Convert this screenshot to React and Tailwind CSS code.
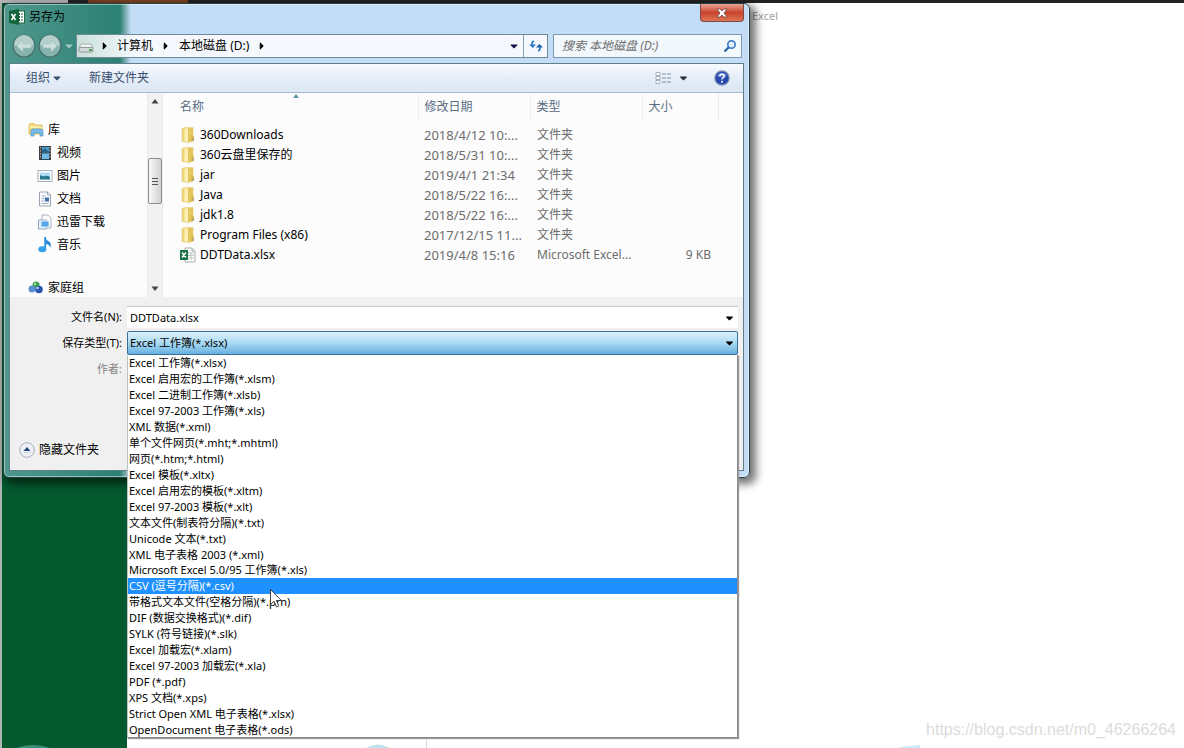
import { FaCaretDown, FaCaretRight } from 'react-icons/fa';

const FILES = [
  { name: '360Downloads', date: '2018/4/12 10:...', type: '文件夹' },
  { name: '360云盘里保存的', date: '2018/5/31 10:...', type: '文件夹' },
  { name: 'jar', date: '2019/4/1 21:34', type: '文件夹' },
  { name: 'Java', date: '2018/5/22 16:...', type: '文件夹' },
  { name: 'jdk1.8', date: '2018/5/22 16:...', type: '文件夹' },
  { name: 'Program Files (x86)', date: '2017/12/15 11...', type: '文件夹' },
  { name: 'DDTData.xlsx', date: '2019/4/8 15:16', type: 'Microsoft Excel...', size: '9 KB' },
];

const FORMATS = [
  'Excel 工作簿(*.xlsx)',
  'Excel 启用宏的工作簿(*.xlsm)',
  'Excel 二进制工作簿(*.xlsb)',
  'Excel 97-2003 工作簿(*.xls)',
  'XML 数据(*.xml)',
  '单个文件网页(*.mht;*.mhtml)',
  '网页(*.htm;*.html)',
  'Excel 模板(*.xltx)',
  'Excel 启用宏的模板(*.xltm)',
  'Excel 97-2003 模板(*.xlt)',
  '文本文件(制表符分隔)(*.txt)',
  'Unicode 文本(*.txt)',
  'XML 电子表格 2003 (*.xml)',
  'Microsoft Excel 5.0/95 工作簿(*.xls)',
  'CSV (逗号分隔)(*.csv)',
  '带格式文本文件(空格分隔)(*.prn)',
  'DIF (数据交换格式)(*.dif)',
  'SYLK (符号链接)(*.slk)',
  'Excel 加载宏(*.xlam)',
  'Excel 97-2003 加载宏(*.xla)',
  'PDF (*.pdf)',
  'XPS 文档(*.xps)',
  'Strict Open XML 电子表格(*.xlsx)',
  'OpenDocument 电子表格(*.ods)',
];

const HIGHLIGHTED = 'CSV (逗号分隔)(*.csv)';

const ExcelAppIcon = () => (
  <svg viewBox="0 0 16 16" className="w-4 h-4 shrink-0">
    <rect x="8" y="2" width="7.5" height="12" fill="#fff" stroke="#1d6b42" />
    <path d="M10.500 4v8M13 4v8" stroke="#1d6b42" strokeDasharray="2 1" />
    <path d="M0 2l10-2v16L0 14z" fill="#14653c" />
    <path d="M2.5 5l4 6M6.5 5l-4 6" stroke="#fff" strokeWidth="1.6" />
  </svg>
);

const SheetIcon = () => (
  <svg viewBox="0 0 16 16" className="w-4 h-4 shrink-0">
    <path d="M5 1h7l3 3v11H5z" fill="#fdfdfd" stroke="#a9b0ac" />
    <path d="M12 1v3h3" fill="#e5e9e7" stroke="#a9b0ac" />
    <path d="M8 6h6M8 8.500h6M8 11h6M11 5v8" stroke="#bccbc2" />
    <rect x="0" y="3" width="8" height="10" fill="#1c7148" />
    <path d="M2 5.500l4 5M6 5.500l-4 5" stroke="#fff" strokeWidth="1.4" />
  </svg>
);

const FolderIcon = () => (
  <svg viewBox="0 0 16 16" className="w-4 h-4 shrink-0">
    <path d="M2 1.500L6 .5h7V14l-5 1.500-6-1z" fill="#f0d676" stroke="#e3cb7a" strokeWidth=".6" />
    <path d="M8 1h5v13l-5 1.500z" fill="#e6c65e" />
    <path d="M4.500 1.500h3.500V15l-3.500-.5z" fill="#fbefb4" />
    <path d="M11 8l3 1v5l-3 .5z" fill="#dcbb52" />
    <path d="M12.800 11v2.500" stroke="#8f9a8c" />
  </svg>
);

const LibraryIcon = () => (
  <svg viewBox="0 0 16 16" className="w-4 h-4 shrink-0">
    <path d="M1 3l1-1.500h4L7 3h7v9H1z" fill="#f6dc7c" stroke="#d9b548" strokeWidth=".8" />
    <path d="M1.500 5h12" stroke="#fdf2bd" strokeWidth="1.500" />
    <path d="M3 14V9q0-2 2-2h7q3 0 3 2v5h-3v-3H6v3z" fill="#78bdea" stroke="#4a93c9" strokeWidth=".7" />
  </svg>
);

const VideoIcon = () => (
  <svg viewBox="0 0 16 16" className="w-4 h-4 shrink-0">
    <rect x="2" y="1" width="12" height="14" fill="#37414c" />
    <rect x="5" y="2" width="7" height="5.500" fill="#4a9ed2" />
    <rect x="5" y="8.500" width="7" height="5.500" fill="#69bde6" />
    <path d="M5 5.500l3-2 4 3v1H5z" fill="#275f86" />
    <path d="M3.500 2v12M13 2v12" stroke="#d7a68a" strokeDasharray="1.500 1.500" />
  </svg>
);

const PictureIcon = () => (
  <svg viewBox="0 0 16 16" className="w-4 h-4 shrink-0">
    <rect x="1" y="2.500" width="14" height="11" fill="#fff" stroke="#a5b0ba" />
    <rect x="3" y="4.500" width="10" height="7" fill="#a9dbf5" />
    <path d="M3 7q3 2 5 1t5 1v2.500H3z" fill="#2b7890" />
  </svg>
);

const DocumentIcon = () => (
  <svg viewBox="0 0 16 16" className="w-4 h-4 shrink-0">
    <path d="M2.500 1h8l3 3v11h-11z" fill="#f9fbfd" stroke="#9aa5b1" />
    <path d="M10.500 1v3h3" fill="#dfe6ee" stroke="#9aa5b1" />
    <path d="M4.500 5h4M4.500 7.500h3M4.500 10h3M4.500 12.500h7" stroke="#9cacbd" />
    <rect x="8" y="6.500" width="4" height="4" fill="#3f6fa5" />
  </svg>
);

const DownloadIcon = () => (
  <svg viewBox="0 0 16 16" className="w-4 h-4 shrink-0">
    <path d="M5 1h6l3 3v10H5z" fill="#fafcfe" stroke="#a8b4c0" />
    <path d="M1.500 6h8v9h-8z" fill="#e8f1fa" stroke="#93a7bc" />
    <rect x="4" y="7" width="8" height="6" rx="1" fill="#56a5e6" stroke="#d9ecfb" />
  </svg>
);

const MusicIcon = () => (
  <svg viewBox="0 0 16 16" className="w-4 h-4 shrink-0">
    <path d="M8 0q1 3 4 4.500t1 6.500q0-4-5-4z" fill="#2a8ddc" />
    <path d="M8.200 0v12" stroke="#2a8ddc" strokeWidth="1.800" />
    <ellipse cx="5.300" cy="12.300" rx="4" ry="3" fill="#35a0ea" />
  </svg>
);

const HomegroupIcon = () => (
  <svg viewBox="0 0 16 16" className="w-4 h-4 shrink-0">
    <circle cx="8" cy="5" r="3.500" fill="#3aa04a" />
    <circle cx="4" cy="9" r="3.500" fill="#5a8fd0" />
    <circle cx="11" cy="9.500" r="3.800" fill="#2c55b0" />
    <circle cx="9.500" cy="8" r="1.300" fill="#b6d3f5" />
    <circle cx="7" cy="4" r="1.200" fill="#a9e0ae" />
  </svg>
);

const LIBRARIES = [
  { label: '视频', Icon: VideoIcon },
  { label: '图片', Icon: PictureIcon },
  { label: '文档', Icon: DocumentIcon },
  { label: '迅雷下载', Icon: DownloadIcon },
  { label: '音乐', Icon: MusicIcon },
];

const NavArrow = ({ label, flip }) => (
  <button aria-label={label} className="w-[26px] h-6">
    <svg viewBox="0 0 26 24" className={flip ? 'w-full h-full -scale-x-100' : 'w-full h-full'}>
      <circle cx="13" cy="12" r="11" fill="#86b3ad" stroke="#466f6a" strokeWidth="1.200" />
      <path d="M3 11a10 10 0 0 1 20 0q-10 4-20 0z" fill="#b5d0cc" />
      <path d="M12 6l-6 6 6 6v-4h8v-4h-8z" fill="#cde0dd" stroke="#a5c4c0" strokeWidth=".7" />
    </svg>
  </button>
);

const TitleBar = () => (
  <header className="flex items-start justify-between px-[5px] h-7">
    <div className="flex items-center gap-1 pt-1">
      <ExcelAppIcon />
      <h1 className="text-black">另存为</h1>
    </div>
    <button
      aria-label="关闭"
      className="flex items-center justify-center w-11 h-[18px] rounded-b border border-t-0 border-[#7b4a48] bg-linear-to-b from-[#e6a596] from-0% via-[#c9422a] via-50% to-[#dc7554]"
    >
      <svg viewBox="0 0 12 10" className="w-3 h-[10px]">
        <path d="M1 1h3l2 2 2-2h3L8 5l3 4H8L6 7 4 9H1l3-4z" fill="#fff" stroke="#6d4a4a" strokeWidth=".8" />
      </svg>
    </button>
  </header>
);

const AddressRow = () => (
  <div className="flex items-center px-[7px] h-7">
    <NavArrow label="后退" />
    <NavArrow label="前进" flip />
    <FaCaretDown className="w-2 ml-[2px] mr-[3px] text-[#9cc8c1]" />
    <nav className="flex flex-1 h-6 border border-[#6f8a97] bg-linear-to-r from-[#c9e0da] to-[#f5f9fd] to-[60px]">
      <div className="flex flex-1 items-center pl-px pr-1 text-black">
        <svg viewBox="0 0 16 16" className="w-4 h-4">
          <path d="M3 6h10l2 4H1z" fill="#f0f2f2" stroke="#92a09d" strokeWidth=".8" />
          <rect x="1" y="9.500" width="14" height="4.500" rx="1" fill="#d3d9d8" stroke="#7e8b88" strokeWidth=".8" />
          <rect x="11" y="11" width="3" height="2" fill="#4da656" />
        </svg>
        <FaCaretRight className="w-2 ml-[7px] mr-2" />
        <button>计算机</button>
        <FaCaretRight className="w-2 mx-[9px]" />
        <button>本地磁盘 (D:)</button>
        <FaCaretRight className="w-2 ml-[9px]" />
        <FaCaretDown className="w-[10px] ml-auto text-[#10104a]" />
      </div>
      <button aria-label="刷新" className="flex items-center justify-center w-6 border-l border-[#8ba0b5]">
        <svg viewBox="0 0 14 12" className="w-[14px] h-3">
          <path d="M5 1Q2 2 3.500 5M9 11q3-1 1.500-4" fill="none" stroke="#2f7bc8" strokeWidth="1.800" />
          <path d="M0 4.500h7L3.800 8z" fill="#2f7bc8" />
          <path d="M7 7.500h7L10.300 4z" fill="#1f5fa8" />
        </svg>
      </button>
    </nav>
    <div className="flex items-center w-[189px] h-6 ml-[5px] border border-[#7f97b0] bg-[#f3f8fd]">
      <input
        aria-label="搜索"
        placeholder="搜索 本地磁盘 (D:)"
        className="flex-1 min-w-0 pl-2 italic outline-none placeholder:text-[#6d6d6d]"
      />
      <svg viewBox="0 0 14 14" className="w-[14px] h-[14px] mr-1">
        <path d="M6 8l-4.500 4.500" stroke="#2c5fa0" strokeWidth="2.200" />
        <circle cx="8.500" cy="5.500" r="3.700" fill="#e5f1fc" stroke="#3478c5" strokeWidth="1.600" />
      </svg>
    </div>
  </div>
);

const Toolbar = () => (
  <div className="flex items-center h-[29px] px-4 border-b border-[#a9bccf] bg-linear-to-b from-[#f8fbfe] via-[#e4edf8] via-50% to-[#dde8f5] text-[#3a4f6e]">
    <button className="flex items-center gap-[2px]">
      组织
      <FaCaretDown className="w-[10px]" />
    </button>
    <button className="ml-[27px]">新建文件夹</button>
    <button aria-label="更改视图" className="flex items-center gap-2 ml-auto text-[#26303c]">
      <svg viewBox="0 0 16 12" className="w-4 h-3">
        <path d="M1 .5h4v3H1zM1 4.500h4v3H1zM1 8.500h4v3H1z" fill="#fff" stroke="#93a0ae" strokeWidth=".8" />
        <path d="M7 2h9M7 6h9M7 10h9" stroke="#7f8e9e" strokeDasharray="4 1" />
      </svg>
      <FaCaretDown className="w-[9px]" />
    </button>
    <button aria-label="帮助" className="ml-[26px] -mr-[3px]">
      <svg viewBox="0 0 16 16" className="w-4 h-4">
        <circle cx="8" cy="8" r="7.200" fill="#2749ae" stroke="#8b98b8" strokeWidth="1.200" />
        <path d="M3 6a5.500 5.500 0 0 1 10 0q-5 3-10 0z" fill="#5f80d2" />
        <path d="M5.800 6.200q0-2 2.200-2t2.200 1.900q0 1.200-1.200 1.800t-1 1.600" fill="none" stroke="#fff" strokeWidth="1.500" />
        <circle cx="8" cy="11.800" r="1" fill="#fff" />
      </svg>
    </button>
  </div>
);

const Sidebar = () => (
  <aside className="flex w-[153px] overflow-hidden text-black">
    <ul className="flex-1 pt-[25px]">
      <li className="flex items-center gap-1 h-[23px] pl-[18px]">
        <LibraryIcon />
        库
      </li>
      {LIBRARIES.map(({ label, Icon }) => (
        <li key={label} className="flex items-center gap-1 h-[23px] pl-[27px]">
          <Icon />
          {label}
        </li>
      ))}
      <li className="flex items-center gap-1 h-[18px] pl-[18px] mt-[23px] leading-4">
        <HomegroupIcon />
        家庭组
      </li>
    </ul>
    <div className="flex flex-col items-center w-4 py-[6px] border-x border-[#ebebeb] bg-[#f1f1f1]">
      <svg viewBox="0 0 8 5" className="w-2 h-[5px]"><path d="M4 0l3.500 4.500h-7z" fill="#444" /></svg>
      <div className="flex flex-col items-center justify-center gap-[2px] w-[14px] h-[46px] mt-[54px] rounded-xs border border-[#8d8d8d] bg-linear-to-r from-[#f8f8f8] to-[#cfd1d3]">
        <span className="w-[6px] h-px bg-[#555]" />
        <span className="w-[6px] h-px bg-[#555]" />
        <span className="w-[6px] h-px bg-[#555]" />
      </div>
      <svg viewBox="0 0 8 5" className="w-2 h-[5px] mt-auto"><path d="M4 5L.5.5h7z" fill="#444" /></svg>
    </div>
  </aside>
);

const FileTable = () => (
  <div className="relative flex-1">
    <svg viewBox="0 0 6 4" className="absolute left-[130px] top-px w-[6px] h-1">
      <path d="M3 0l3 4H0z" fill="#5b9aa8" />
    </svg>
    <table className="w-full table-fixed border-collapse text-left text-[#6d6d6d]">
      <colgroup>
        <col className="w-[255px]" />
        <col className="w-28" />
        <col className="w-28" />
        <col className="w-[76px]" />
        <col />
      </colgroup>
      <thead>
        <tr className="h-7 text-[#5a6c84]">
          <th className="pl-[17px] font-normal border-r border-[#ebeff4]">名称</th>
          <th className="pl-[6px] font-normal border-r border-[#ebeff4]">修改日期</th>
          <th className="pl-[6px] font-normal border-r border-[#ebeff4]">类型</th>
          <th className="pl-[6px] font-normal border-r border-[#ebeff4]">大小</th>
          <td />
        </tr>
      </thead>
      <tbody className="before:block before:h-1">
        {FILES.map((file) => (
          <tr key={file.name} className="h-5 whitespace-nowrap">
            <td className="pl-[17px] text-black">
              <div className="flex items-center gap-1">
                {file.size ? <SheetIcon /> : <FolderIcon />}
                {file.name}
              </div>
            </td>
            <td className="pl-[6px] text-[13px]">{file.date}</td>
            <td className="pl-[7px]">{file.type}</td>
            <td className="pr-[7px] text-right">{file.size}</td>
            <td />
          </tr>
        ))}
      </tbody>
    </table>
  </div>
);

const FormatList = () => (
  <ul
    role="listbox"
    aria-label="保存类型"
    className="absolute left-0 top-full z-10 flex flex-col w-full h-[383px] border border-[#8a8a8a] border-l-[#b9c2bf] border-t-0 bg-white shadow-[1px_1px_1px_#999] text-black"
  >
    {FORMATS.map((format) => (
      <li
        key={format}
        role="option"
        aria-selected={format === HIGHLIGHTED}
        className={`flex flex-1 items-center pl-px leading-[15px] whitespace-nowrap ${
          format === HIGHLIGHTED ? 'bg-[#1e90ff] text-white' : ''
        }`}
      >
        {format}
      </li>
    ))}
  </ul>
);

const SaveForm = () => (
  <form className="h-[173px] pt-[9px] pr-[5px] bg-[#f0f0f0] text-black">
    <div className="flex items-center">
      <label htmlFor="file-name" className="w-[117px] pr-[5px] text-right text-[11px]">文件名(N):</label>
      <div className="flex flex-1 items-center h-[22px] pr-1 border-t border-[#c4c4c4] bg-white">
        <input id="file-name" defaultValue="DDTData.xlsx" className="flex-1 pl-[3px] text-[11px] outline-none" />
        <FaCaretDown className="w-[9px]" />
      </div>
    </div>
    <div className="flex items-center mt-[3px] text-[11px]">
      <label htmlFor="file-type" className="w-[117px] pr-[5px] text-right">保存类型(T):</label>
      <div className="relative flex-1">
        <div className="flex items-center h-6 pr-[3px] rounded-xs border border-[#37719b] bg-linear-to-b from-[#dcf0fa] from-0% via-[#a9daf3] via-50% to-[#66b0e0]">
          <select id="file-type" className="flex-1 pl-[2px] appearance-none outline-none">
            {FORMATS.map((format) => (
              <option key={format}>{format}</option>
            ))}
          </select>
          <FaCaretDown className="w-[9px] text-[12px]" />
        </div>
        <FormatList />
      </div>
    </div>
    <p className="w-[117px] mt-[5px] pr-[5px] text-right text-[11px] text-[#838383]">作者:</p>
    <button type="button" className="flex items-center gap-1 mt-[63px] ml-[9px]">
      <svg viewBox="0 0 16 16" className="w-4 h-4">
        <circle cx="8" cy="8" r="7.300" fill="#eef2f7" stroke="#a3adba" />
        <path d="M8 5l3.500 4h-7z" fill="#24437e" />
        <path d="M4 10.500h8" stroke="#c9d2dd" />
      </svg>
      隐藏文件夹
    </button>
  </form>
);

const SaveDialog = () => (
  <section
    role="dialog"
    aria-label="另存为"
    className="absolute left-[3px] top-[3px] w-[747px] rounded-md border border-[#23423f] bg-linear-to-r from-[#4f988d] from-0% via-[#2c8074] via-[116px] to-[#c3ddf7] to-[127px] shadow-[inset_0_0_0_1px_rgba(255,255,255,0.45),4px_4px_8px_2px_rgba(0,0,0,0.55)]"
  >
    <TitleBar />
    <AddressRow />
    <div className="mt-[3px] mx-[5px] mb-[6px] border border-[#5d7f8c]">
      <Toolbar />
      <div className="flex h-[204px] bg-[#fcfcfc]">
        <Sidebar />
        <FileTable />
      </div>
      <SaveForm />
    </div>
  </section>
);

const Backdrop = () => (
  <div className="flex flex-col h-full">
    <div className="flex h-[3px] bg-[#222222]">
      <span className="w-[68px] bg-[#b5b5b5]" />
      <span className="w-[100px] ml-5 bg-[#7a4021]" />
    </div>
    <div className="flex flex-1 border-l-2 border-[#aeb4b2]">
      <div className="w-[125px] bg-[#04592f]" />
      <div className="flex flex-1 flex-col justify-between">
        <p className="pt-1 pl-[625px] text-[11px] text-[#a3a3a3]">Excel</p>
        <p className="pr-2 pb-2 text-right text-[16px] leading-5 text-[#dcdcdc] font-['Liberation_Sans',sans-serif]">
          https://blog.csdn.net/m0_46266264
        </p>
      </div>
    </div>
  </div>
);

const App = () => (
  <main className="relative w-full h-screen overflow-hidden bg-white text-[12px] leading-[18px] font-['Noto_Sans','Noto_Sans_CJK_SC',sans-serif]">
    <Backdrop />
    <svg viewBox="0 0 930 10" className="absolute left-0 bottom-0 w-[930px] h-[10px]">
      <path d="M16 10q17-6 34 0z" fill="#3f8f78" />
      <path d="M366 10q12-7 24 0z" fill="#bfe3ee" />
      <path d="M426.500 2v8" stroke="#d5d5d5" />
      <path d="M900 9l20-2v3h-20z" fill="#cdeaf8" />
    </svg>
    <SaveDialog />
    <svg viewBox="0 0 12 19" className="absolute left-[270px] top-[589px] z-20 w-3 h-[19px]">
      <path d="M.5.5v15l3.500-3.300L6.500 18l2.300-1-2.400-5.500h5z" fill="#fff" stroke="#333" strokeWidth=".9" />
    </svg>
  </main>
);

export default App;
